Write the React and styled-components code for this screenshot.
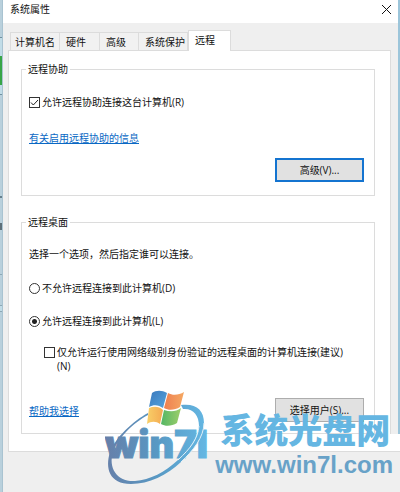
import styled, { createGlobalStyle } from 'styled-components'

const GlobalStyle = createGlobalStyle`
    * {
        box-sizing: border-box;
    }
    body {
        margin: 0;
        background-color: #efefef;
        color: #111;
        font-family: "Open Sans", "Noto Sans CJK SC", sans-serif;
        font-size: 10px;
        line-height: 14px;
    }
`
const Desktop = styled.div`
    position: relative;
    display: flex;
    min-height: 100vh;
    overflow: hidden;
`
const LeftEdge = styled.div`
    display: flex;
    flex-direction: column;
    width: 3px;
    background-color: #b9d0dc;
    border-right: 1px solid #a9c3d1;
`
const EdgeBlock = styled.div`
    height: ${props => props.$size}px;
    background-color: ${props => props.$color};
`
const RightEdge = styled.div`
    width: 2px;
    margin-bottom: 58px;
    background-color: #9cc5da;
`
const Dialog = styled.main`
    flex: 1;
    min-width: 0;
    background-color: #efefef;
`
const TitleBar = styled.header`
    display: flex;
    justify-content: space-between;
    align-items: center;
    height: 23px;
    padding: 0 7px 5px;
    background-color: #fff;
`
const Title = styled.h1`
    margin: 0;
    font-size: 10px;
    font-weight: 400;
`
const CloseButton = styled.button`
    display: flex;
    padding: 0;
    border: 0;
    background: none;
`
const Tabs = styled.nav`
    display: flex;
    align-items: flex-end;
    height: 27px;
    padding-left: 7px;
`
const Tab = styled.button`
    position: relative;
    height: ${props => props.$active ? 21 : 18}px;
    width: ${props => props.$width}px;
    margin-bottom: ${props => props.$active ? -1 : 0}px;
    padding: 0 0 ${props => props.$active ? 3 : 0}px ${props => props.$first ? 4 : 6}px;
    border: 1px solid #dcdcdc;
    border-bottom: 0;
    border-left-width: ${props => props.$first || props.$active ? 1 : 0}px;
    background-color: ${props => props.$active ? '#fff' : '#f1f1f1'};
    color: inherit;
    font: inherit;
    text-align: left;
    white-space: nowrap;
    z-index: 1;
`
const Panel = styled.section`
    position: relative;
    display: flex;
    flex-direction: column;
    gap: 19px;
    margin: 0 7px 0 5px;
    padding: 11px 15px 17px 12px;
    border: 1px solid #dcdcdc;
    background-color: #fff;
`
// white band that runs over the frame's lower right corner
const Corner = styled.div`
    position: absolute;
    right: -10px;
    bottom: -1px;
    width: 10px;
    height: 18px;
    border-bottom: 1px solid #dcdcdc;
    background-color: #fff;
`
const Group = styled.fieldset`
    display: flex;
    flex-direction: column;
    min-width: 0;
    margin: 0;
    padding: ${props => props.$padding};
    border: 1px solid #dcdcdc;
`
const Legend = styled.legend`
    margin-left: -3px;
    padding: 0 2px;
`
const Text = styled.p`
    margin: 0;
`
const Option = styled.label`
    display: flex;
    align-items: flex-start;
    gap: 2px;
    margin: ${props => props.$margin || 0};
`
const CheckBox = styled.input`
    appearance: none;
    flex: none;
    width: 11px;
    height: 11px;
    margin: 2px 0 0;
    border: 1px solid #333;
    background-color: #fff;
    &:checked {
        background-image: url("data:image/svg+xml,%3Csvg xmlns='http://www.w3.org/2000/svg' viewBox='0 0 9 9'%3E%3Cpath d='M1 4.5 3.3 7 8 2' fill='none' stroke='%23222'/%3E%3C/svg%3E");
    }
`
const Radio = styled(CheckBox)`
    border-radius: 50%;
    &:checked {
        background-image: radial-gradient(circle, #222 0 2px, #fff 3px);
    }
`
const Link = styled.a`
    align-self: flex-start;
    margin: ${props => props.$margin || 0};
    color: #0a68c4;
    text-underline-offset: 1px;
`
const Button = styled.button`
    align-self: flex-end;
    width: 89px;
    height: 24px;
    padding: 0;
    border: ${props => props.$primary ? '2px solid #1474d0' : '1px solid #adadad'};
    background-color: #e1e1e1;
    color: inherit;
    font: inherit;
`
const Actions = styled.div`
    display: flex;
    justify-content: space-between;
    margin-top: 25px;
`
const Watermark = styled.div`
    position: absolute;
    right: 7px;
    bottom: 0;
    display: flex;
    pointer-events: none;
`
const Brand = styled.svg`
    display: block;
    width: 110px;
    height: 104px;
    font-family: Inter, "Liberation Sans", sans-serif;
    font-weight: 900;
`
const Site = styled.div`
    padding: 19px 0 0 5px;
    color: #65b6e2;
    font-family: "Noto Sans CJK SC", sans-serif;
    font-size: 34px;
    font-weight: 900;
    line-height: 44px;
    white-space: nowrap;
`
const Url = styled.div`
    color: #68a2c8;
    font-family: "Liberation Sans", sans-serif;
    font-size: 24px;
    font-weight: 700;
    line-height: 28px;
`

const tabs = [
    { name: '计算机名', width: 50 },
    { name: '硬件', width: 40 },
    { name: '高级', width: 39 },
    { name: '系统保护', width: 49 },
    { name: '远程', width: 43 },
]

const edge = [
    [37, '#b9d0dc'],
    [1, '#71909f'],
    [18, '#c1dce7'],
    [29, '#38a547'],
    [9, '#c1dce7'],
    [1, '#71909f'],
    [101, '#b9d0dc'],
    [2, '#66808d'],
    [25, '#b9d0dc'],
    [7, '#5d6f79'],
    [44, '#b9d0dc'],
    [1, '#8da8b5'],
    [30, '#b9d0dc'],
    [1, '#8da8b5'],
    [5, '#c1dce7'],
    [1, '#8da8b5'],
]

const Logo = () => (
    <Brand viewBox="0 0 110 104" aria-hidden="true">
        <defs>
            <linearGradient id="ring" gradientUnits="userSpaceOnUse" x1="0" y1="0" x2="105" y2="0">
                <stop offset="0" stopColor="#667fa9" />
                <stop offset=".5" stopColor="#5899c4" />
                <stop offset="1" stopColor="#65b9e5" />
            </linearGradient>
            <linearGradient id="blue" y2="1"><stop stopColor="#3a78bd" /><stop offset="1" stopColor="#56a5dc" /></linearGradient>
            <linearGradient id="red"><stop stopColor="#ee7f50" /><stop offset="1" stopColor="#f5a862" /></linearGradient>
            <linearGradient id="yellow"><stop stopColor="#f8cf68" /><stop offset="1" stopColor="#f5aa52" /></linearGradient>
            <linearGradient id="green"><stop stopColor="#54b665" /><stop offset="1" stopColor="#9dce6a" /></linearGradient>
        </defs>
        <path fill="url(#ring)" d="M43 25C28 33 10 50 5 64C0 80 4 96 26 96C44 96 62 87 76 74C88 63 99 49 99 35C99 22 91 15 76 17L78 21C88 20 94 27 94 38C93 50 86 60 73 72C60 84 45 92 30 93C12 94 3 80 8 64C13 50 28 35 43 27Z" />
        <text x="0" y="70" fontSize="38" fill="url(#ring)" stroke="url(#ring)" strokeWidth="1">win7l</text>
        <path fill="none" stroke="#e4f1f8" d="M99 35C99 49 88 63 76 74M94 38C93 50 86 60 73 72" />
        <path fill="url(#blue)" d="M47 5C51 2 57 2 62 5L58 20C54 17 49 16 44 19Z" />
        <path fill="url(#red)" d="M63 5C68 8 74 7 79 4L75 19C70 22 64 23 59 20Z" />
        <path fill="url(#yellow)" d="M44 20C49 18 54 18 58 22L55 36C51 33 46 33 42 36Z" />
        <path fill="url(#green)" d="M59 22C65 24 71 24 76 20L72 35C67 38 61 39 56 36Z" />
    </Brand>
)

const App = () => {
    return (
        <>
            <GlobalStyle />
            <Desktop>
                <LeftEdge>
                    {edge.map(([size, color], i) => <EdgeBlock key={i} $size={size} $color={color} />)}
                </LeftEdge>
                <Dialog>
                    <TitleBar>
                        <Title>系统属性</Title>
                        <CloseButton type="button" aria-label="关闭">
                            <svg width="9" height="9" viewBox="0 0 9 9"><path d="m0 0 9 9M9 0 0 9" stroke="#111" /></svg>
                        </CloseButton>
                    </TitleBar>
                    <Tabs>
                        {tabs.map((tab, i) => (
                            <Tab key={tab.name} type="button" $width={tab.width} $first={i === 0} $active={i === 4}>
                                {tab.name}
                            </Tab>
                        ))}
                    </Tabs>
                    <Panel>
                        <Group $padding="19px 10px 13px 7px">
                            <Legend>远程协助</Legend>
                            <Option>
                                <CheckBox type="checkbox" defaultChecked />
                                允许远程协助连接这台计算机(R)
                            </Option>
                            <Link href="#help" $margin="22px 0 13px">有关启用远程协助的信息</Link>
                            <Button type="button" $primary>高级(V)...</Button>
                        </Group>
                        <Group $padding="18px 10px 11px 7px">
                            <Legend>远程桌面</Legend>
                            <Text>选择一个选项，然后指定谁可以连接。</Text>
                            <Option $margin="20px 0 0">
                                <Radio type="radio" name="remote" />
                                不允许远程连接到此计算机(D)
                            </Option>
                            <Option $margin="19px 0 0">
                                <Radio type="radio" name="remote" defaultChecked />
                                允许远程连接到此计算机(L)
                            </Option>
                            <Option $margin="17px 0 0 15px">
                                <CheckBox type="checkbox" />
                                <span>仅允许运行使用网络级别身份验证的远程桌面的计算机连接(建议)<br />(N)</span>
                            </Option>
                            <Actions>
                                <Link href="#choose" $margin="6px 0 0">帮助我选择</Link>
                                <Button type="button">选择用户(S)...</Button>
                            </Actions>
                        </Group>
                        <Corner />
                    </Panel>
                </Dialog>
                <RightEdge />
                <Watermark>
                    <Logo />
                    <div>
                        <Site>系统光盘网</Site>
                        <Url>www.win7l.com</Url>
                    </div>
                </Watermark>
            </Desktop>
        </>
    )
}

export default App
